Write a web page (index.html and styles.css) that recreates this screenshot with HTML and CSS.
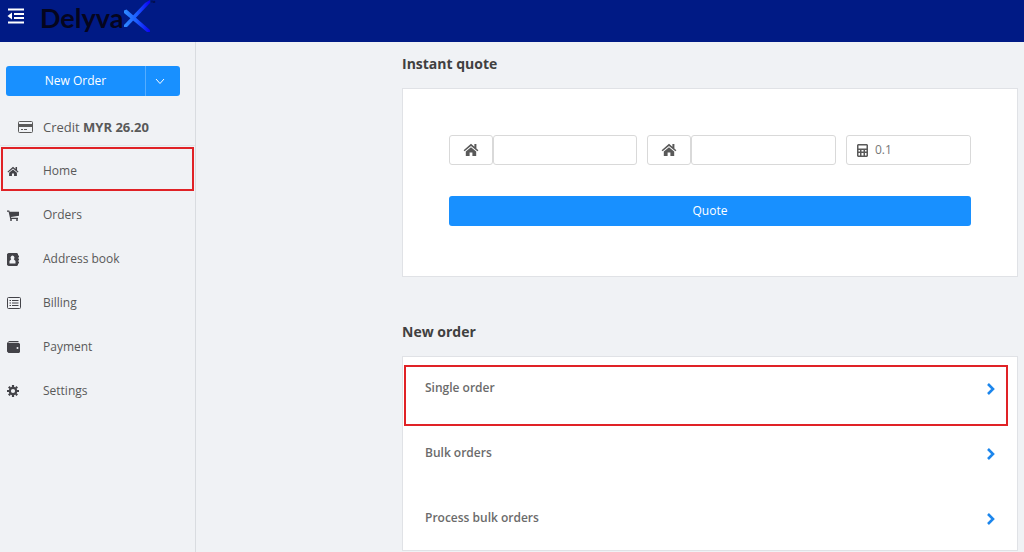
FILE: index.html
```html
<!DOCTYPE html>
<html lang="en">
<head>
    <meta charset="UTF-8">
    <meta name="viewport" content="width=device-width, initial-scale=1.0">
    <title>DelyvaX</title>
    <link rel="stylesheet" href="styles.css">
</head>
<body>

    <svg class="sprite" aria-hidden="true">
        <symbol id="icon-home" viewBox="0 0 16 14">
            <path d="M8 0.8 0.6 7.2l1 1.1L8 2.9l6.4 5.4 1-1.1-2-1.8V1h-2v2.7z"/>
            <path d="M8 4.2 2.8 8.5V13h3.8V9.5h2.8V13h3.8V8.5z"/>
        </symbol>
        <symbol id="icon-arrow" viewBox="0 0 10 14">
            <path d="M2 2l5 5-5 5" fill="none" stroke="currentColor" stroke-width="2.6"/>
        </symbol>
    </svg>

    <header class="topbar">
        <button type="button" class="menu-toggle" aria-label="Collapse menu">
            <svg width="18" height="16" viewBox="0 0 18 16">
                <path d="M1 1.5h16M7 6h10M7 10h10M1 14.5h16" fill="none" stroke="currentColor" stroke-width="2"/>
                <path d="M0.5 8 5 4.5v7z" fill="currentColor"/>
            </svg>
        </button>
        <a href="#" class="logo">
            <span class="logo-text">Delyva</span>
            <svg class="logo-mark" width="28" height="32" viewBox="0 0 28 32" role="img" aria-label="X">
                <defs>
                    <linearGradient id="mark" x1="0" x2="1" y1="0" y2="0">
                        <stop offset="0" stop-color="#2f8cff"/>
                        <stop offset="0.5" stop-color="#1c5cff"/>
                        <stop offset="1" stop-color="#0a00f5"/>
                    </linearGradient>
                </defs>
                <path d="M1 10.5 3.5 9.5 27 30v2h-3L1 13z" fill="url(#mark)"/>
                <path d="M1 25 22 3 27 0v3L4 27H1z" fill="url(#mark)"/>
            </svg>
            <span class="tm">™</span>
        </a>
    </header>

    <div class="layout">
        <aside class="sidebar">
            <div class="new-order">
                <button type="button" class="btn btn-main">New Order</button>
                <button type="button" class="btn btn-drop" aria-label="More order options">
                    <svg width="10" height="7" viewBox="0 0 10 7">
                        <path d="M1 1l4 4.5L9 1" fill="none" stroke="currentColor"/>
                    </svg>
                </button>
            </div>

            <div class="credit">
                <svg width="15" height="12" viewBox="0 0 15 12">
                    <rect x="0.5" y="0.5" width="14" height="11" rx="1" fill="none" stroke="currentColor"/>
                    <path d="M0 3h15v3H0z"/>
                    <path d="M3 8.5h2M6 8.5h3" stroke="currentColor"/>
                </svg>
                <span>Credit <b>MYR 26.20</b></span>
            </div>

            <nav class="menu">
                <a href="#" class="menu-item marked">
                    <svg width="12" height="11"><use href="#icon-home"/></svg>
                    <span>Home</span>
                </a>
                <a href="#" class="menu-item">
                    <svg width="12" height="11" viewBox="0 0 12 11">
                        <path d="M0 0.5h2.3l0.4 1.2H12v4L4 7l0.2 0.8H11V9H3.2L1.6 1.7H0z"/>
                        <circle cx="4" cy="10" r="1"/>
                        <circle cx="10" cy="10" r="1"/>
                    </svg>
                    <span>Orders</span>
                </a>
                <a href="#" class="menu-item">
                    <svg width="12" height="13" viewBox="0 0 12 13">
                        <path fill-rule="evenodd" d="M1.5 0H10l1 1v1.500h1v2h-1v1h1v2h-1v1h1v2h-1V12l-1 1H1.500L0 12V1zM5.500 2.500a2 2.200 0 0 0-1.300 3.800L2.500 8v2.500h6V8L6.800 6.300a2 2.200 0 0 0-1.300-3.800z"/>
                    </svg>
                    <span>Address book</span>
                </a>
                <a href="#" class="menu-item">
                    <svg width="14" height="12" viewBox="0 0 14 12">
                        <rect x="0.5" y="0.5" width="13" height="11" rx="1" fill="none" stroke="currentColor"/>
                        <path d="M2.5 3.5H4M5 3.5h6.5M2.5 6H4M5 6h6.5M2.5 8.5H4M5 8.5h6.5" stroke="currentColor"/>
                    </svg>
                    <span>Billing</span>
                </a>
                <a href="#" class="menu-item">
                    <svg width="13" height="12" viewBox="0 0 13 12">
                        <path fill-rule="evenodd" d="M2 0h9.5v1.2h-10V2H12l1 1v8l-1 1H1.5L0 10.5V2zM10.500 6a1 1 0 1 0 0 2 1 1 0 0 0 0-2z"/>
                    </svg>
                    <span>Payment</span>
                </a>
                <a href="#" class="menu-item">
                    <svg width="12" height="12" viewBox="0 0 12 12">
                        <circle cx="6" cy="6" r="3.2" fill="none" stroke="currentColor" stroke-width="2.2"/>
                        <path d="M6 0v2M6 10v2M0 6h2M10 6h2M1.8 1.8l1.4 1.4M8.8 8.8l1.4 1.4M1.8 10.2l1.4-1.4M8.8 3.2l1.4-1.4" stroke="currentColor" stroke-width="2.2"/>
                    </svg>
                    <span>Settings</span>
                </a>
            </nav>
        </aside>

        <main class="content">
            <h2>Instant quote</h2>
            <form class="card quote">
                <div class="fields">
                    <div class="field">
                        <label for="from" aria-label="From address"><svg width="16" height="14"><use href="#icon-home"/></svg></label>
                        <input type="text" id="from">
                    </div>
                    <div class="field">
                        <label for="to" aria-label="To address"><svg width="16" height="14"><use href="#icon-home"/></svg></label>
                        <input type="text" id="to">
                    </div>
                    <div class="field weight">
                        <label for="weight" aria-label="Weight">
                            <svg width="11" height="13" viewBox="0 0 11 13">
                                <path fill-rule="evenodd" d="M1 0h9l1 1v11l-1 1H1l-1-1V1zM1.500 1.500v3h8v-3zM1.500 6v1.500H3V6zM4.500 6v1.500h2V6zM8 6v1.500h1.500V6zM1.500 9v2.500H3V9zM4.500 9v2.500h2V9zM8 9v2.500h1.500V9z"/>
                            </svg>
                        </label>
                        <input type="text" id="weight" value="0.1">
                    </div>
                </div>
                <button type="submit" class="btn btn-quote">Quote</button>
            </form>

            <h2>New order</h2>
            <div class="card orders">
                <a href="#" class="order marked">
                    <span>Single order</span>
                    <svg width="10" height="14"><use href="#icon-arrow"/></svg>
                </a>
                <a href="#" class="order">
                    <span>Bulk orders</span>
                    <svg width="10" height="14"><use href="#icon-arrow"/></svg>
                </a>
                <a href="#" class="order">
                    <span>Process bulk orders</span>
                    <svg width="10" height="14"><use href="#icon-arrow"/></svg>
                </a>
            </div>
        </main>
    </div>

</body>
</html>
```
FILE: styles.css
```css
* {
    box-sizing: border-box;
}
body {
    margin: 0;
    font-family: "Open Sans", "Noto Sans", sans-serif;
    font-size: 12px;
    line-height: 20px;
    color: #595959;
    background-color: #f0f2f5;
}
a {
    color: inherit;
    text-decoration: none;
}
svg {
    display: block;
    fill: currentColor;
}
.sprite {
    display: none;
}

/* top bar */
.topbar {
    display: flex;
    align-items: flex-start;
    height: 42px;
    padding-left: 7px;
    background: #001a85;
}
.menu-toggle {
    margin-top: 8px;
    padding: 0;
    border: none;
    background: none;
    color: white;
    cursor: pointer;
}
.logo {
    display: flex;
    margin-left: 15px;
    color: #05051e;
}
.logo-text {
    font-family: "Lato", sans-serif;
    font-size: 27px;
    line-height: 36px;
    font-weight: bold;
}
.tm {
    font-size: 6px;
    line-height: 6px;
}

/* sidebar */
.layout {
    display: flex;
}
.sidebar {
    flex: none;
    width: 196px;
    min-height: calc(100vh - 42px);
    padding-top: 24px;
    border-right: 1px solid #d9dce0;
}
.btn {
    height: 30px;
    padding: 0;
    border: none;
    border-radius: 3px;
    background: #1890ff;
    color: white;
    font: inherit;
    cursor: pointer;
}
.new-order {
    display: flex;
    margin: 0 15px 0 6px;
}
.btn-main {
    flex: 1;
    border-radius: 3px 0 0 3px;
}
.btn-drop {
    display: flex;
    align-items: center;
    justify-content: center;
    width: 35px;
    padding-right: 6px;
    border-left: 1px solid #55adff;
    border-radius: 0 3px 3px 0;
}
.credit {
    display: flex;
    align-items: center;
    gap: 10px;
    height: 49px;
    margin-top: 1px;
    padding: 12px 0 0 18px;
    border-bottom: 1px solid #e3e5e8;
    font-size: 13px;
}
.menu {
    padding: 1px 1px 0;
}
.menu-item {
    display: grid;
    grid-template-columns: 36px auto;
    align-items: center;
    height: 44px;
    padding: 4px 0 0 4px;
    border: 2px solid transparent;
}
.menu-item svg {
    color: #434348;
}

/* main area */
.content {
    flex: 1;
    min-width: 0;
    padding: 12px 6px 0 206px;
}
h2 {
    margin: 0 0 14px;
    font-size: 14px;
    line-height: 20px;
    color: #404040;
}
.card {
    border: 1px solid #e0e2e6;
    background: white;
}
.quote {
    margin-bottom: 45px;
    padding: 46px 46px 50px;
}
.fields {
    display: flex;
    gap: 10px;
    margin-bottom: 31px;
}
.field {
    display: flex;
    flex: 190;
    min-width: 0;
    height: 30px;
}
.field label {
    display: flex;
    flex: none;
    align-items: center;
    justify-content: center;
    width: 44px;
    border: 1px solid #d9d9d9;
    border-radius: 3px;
}
.field input {
    flex: 1;
    min-width: 0;
    padding: 0 8px;
    border: 1px solid #d9d9d9;
    border-radius: 3px;
    background: white;
    font: inherit;
    color: #777;
}
.field.weight {
    flex: 124;
    border: 1px solid #d9d9d9;
    border-radius: 3px;
}
.weight label {
    width: 22px;
    padding-left: 10px;
    border: none;
}
.weight input {
    padding-left: 6px;
    border: none;
}
.btn-quote {
    display: block;
    width: 100%;
}
.orders {
    padding: 8px 9px 0 1px;
    font-weight: 600;
    color: #6b6b6b;
}
.order {
    display: flex;
    justify-content: space-between;
    height: 61px;
    margin-bottom: 4px;
    padding: 11px 10px 0 19px;
    border: 2px solid transparent;
}
.order:last-child {
    height: 55px;
    margin-bottom: 0;
}
.order svg {
    margin-top: 4px;
    color: #1c86ec;
}

/* highlighted entries */
.marked {
    border-color: #e02226;
}
```
